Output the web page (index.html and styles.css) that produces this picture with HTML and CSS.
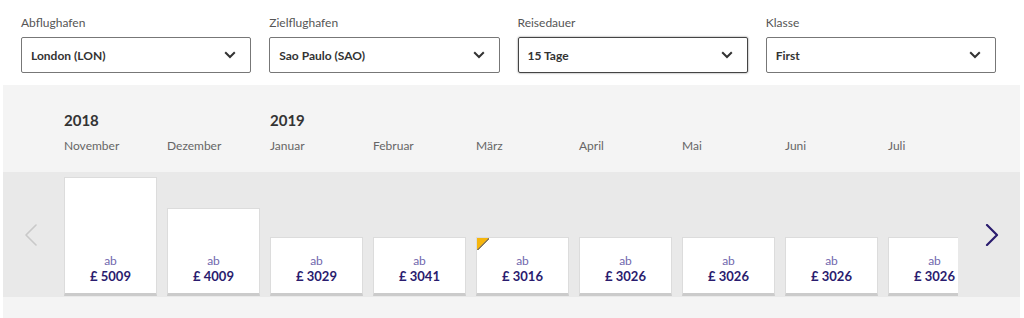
FILE: index.html
```html
<!DOCTYPE html>
<html lang="de">
<head>
  <meta charset="UTF-8" />
  <title>Flugpreise</title>
  <link rel="stylesheet" href="styles.css">
</head>
<body>

  <div class="filters">
    <div class="field">
      <label>Abflughafen</label>
      <div class="select">London (LON)
        <svg viewBox="0 0 12 8" width="12" height="8"><path d="M1.2 1.3 L6 6 L10.8 1.3" /></svg>
      </div>
    </div>
    <div class="field">
      <label>Zielflughafen</label>
      <div class="select">Sao Paulo (SAO)
        <svg viewBox="0 0 12 8" width="12" height="8"><path d="M1.2 1.3 L6 6 L10.8 1.3" /></svg>
      </div>
    </div>
    <div class="field">
      <label>Reisedauer</label>
      <div class="select focus">15 Tage
        <svg viewBox="0 0 12 8" width="12" height="8"><path d="M1.2 1.3 L6 6 L10.8 1.3" /></svg>
      </div>
    </div>
    <div class="field">
      <label>Klasse</label>
      <div class="select">First
        <svg viewBox="0 0 12 8" width="12" height="8"><path d="M1.2 1.3 L6 6 L10.8 1.3" /></svg>
      </div>
    </div>
  </div>

  <div class="calendar">
    <div class="months">
      <div class="month"><span class="year">2018</span><span class="name">November</span></div>
      <div class="month"><span class="year"></span><span class="name">Dezember</span></div>
      <div class="month"><span class="year">2019</span><span class="name">Januar</span></div>
      <div class="month"><span class="year"></span><span class="name">Februar</span></div>
      <div class="month"><span class="year"></span><span class="name">März</span></div>
      <div class="month"><span class="year"></span><span class="name">April</span></div>
      <div class="month"><span class="year"></span><span class="name">Mai</span></div>
      <div class="month"><span class="year"></span><span class="name">Juni</span></div>
      <div class="month"><span class="year"></span><span class="name">Juli</span></div>
    </div>

    <div class="chart">
      <div class="nav prev">
        <svg viewBox="0 0 14 22" width="14" height="22"><path d="M12 1 L2 11 L12 21" /></svg>
      </div>
      <div class="bars">
        <div class="bar" style="height:119px"><span class="ab">ab</span><span class="price">£ 5009</span></div>
        <div class="bar" style="height:88px"><span class="ab">ab</span><span class="price">£ 4009</span></div>
        <div class="bar" style="height:59px"><span class="ab">ab</span><span class="price">£ 3029</span></div>
        <div class="bar" style="height:59px"><span class="ab">ab</span><span class="price">£ 3041</span></div>
        <div class="bar best" style="height:59px"><span class="ab">ab</span><span class="price">£ 3016</span></div>
        <div class="bar" style="height:59px"><span class="ab">ab</span><span class="price">£ 3026</span></div>
        <div class="bar" style="height:59px"><span class="ab">ab</span><span class="price">£ 3026</span></div>
        <div class="bar" style="height:59px"><span class="ab">ab</span><span class="price">£ 3026</span></div>
        <div class="bar" style="height:59px"><span class="ab">ab</span><span class="price">£ 3026</span></div>
      </div>
      <div class="nav next">
        <svg viewBox="0 0 14 22" width="14" height="22"><path d="M2 1 L12 11 L2 21" /></svg>
      </div>
    </div>

    <div class="foot"></div>
  </div>

</body>
</html>
```

FILE: styles.css
```css
body {
  font-family: Lato, "Open Sans", Arial, sans-serif;
  background: #fff;
  margin: 0;
  padding: 0;
  color: #333;
}

/* filtres */
.filters {
  display: grid;
  grid-template-columns: repeat(4, 1fr);
  column-gap: 18px;
  width: 975px;
  padding: 16px 0 0 21px;
}
.field label {
  display: block;
  font-size: 12px;
  line-height: 14px;
  color: #555;
  margin-bottom: 7px;
}
.select {
  box-sizing: border-box;
  height: 36px;
  border: 1px solid #777;
  border-radius: 2px;
  padding: 0 14px 0 9px;
  display: flex;
  align-items: center;
  justify-content: space-between;
  font-size: 12px;
  font-weight: bold;
  color: #333;
}
.select.focus {
  border-color: #444;
  box-shadow: 0 0 2px rgba(0,0,0,0.55);
}
.select svg path {
  fill: none;
  stroke: #333;
  stroke-width: 2;
}

/* calendrier */
.calendar {
  margin: 12px 0 0 3px;
  width: 1017px;
}
.months {
  display: flex;
  background: #f4f4f4;
  height: 87px;
  box-sizing: border-box;
  padding: 26px 0 0 61px;
}
.month {
  width: 103px;
  flex-shrink: 0;
}
.year {
  display: block;
  height: 18px;
  font-size: 15px;
  line-height: 18px;
  font-weight: bold;
  color: #333;
  margin-bottom: 10px;
}
.name {
  display: block;
  font-size: 12px;
  line-height: 14px;
  color: #666;
}

.chart {
  display: flex;
  height: 125px;
  background: #e9e9e9;
}
.nav {
  display: flex;
  align-items: center;
  justify-content: center;
  flex-shrink: 0;
}
.nav path {
  fill: none;
  stroke-linecap: round;
  stroke-linejoin: round;
}
.prev {
  width: 61px;
  padding-right: 6px;
  box-sizing: border-box;
}
.prev path {
  stroke: #c9c9c9;
  stroke-width: 1.6;
}
.next {
  width: 62px;
  padding-left: 6px;
  box-sizing: border-box;
}
.next path {
  stroke: #2a1c6e;
  stroke-width: 2.2;
}
.bars {
  width: 894px;
  overflow: hidden;
  display: flex;
  align-items: flex-end;
  gap: 10px;
  padding-bottom: 1px;
}
.bar {
  position: relative;
  box-sizing: border-box;
  width: 93px;
  flex-shrink: 0;
  background: #fff;
  border: 1px solid #dcdcdc;
  border-bottom: 3px solid #cbcbcb;
  display: flex;
  flex-direction: column;
  justify-content: flex-end;
  align-items: center;
  padding-bottom: 9px;
}
.ab {
  font-size: 12px;
  line-height: 14px;
  color: #7067ad;
}
.price {
  font-size: 13px;
  line-height: 16px;
  font-weight: bold;
  color: #2a1c6e;
}
.bar.best::before {
  content: "";
  position: absolute;
  top: 0;
  left: 0;
  width: 12px;
  height: 12px;
  background: linear-gradient(135deg, #f6b50c 0 46%, #8d7d5c 46% 58%, transparent 58%);
}

.foot {
  height: 30px;
  background: #f4f4f4;
}
```
